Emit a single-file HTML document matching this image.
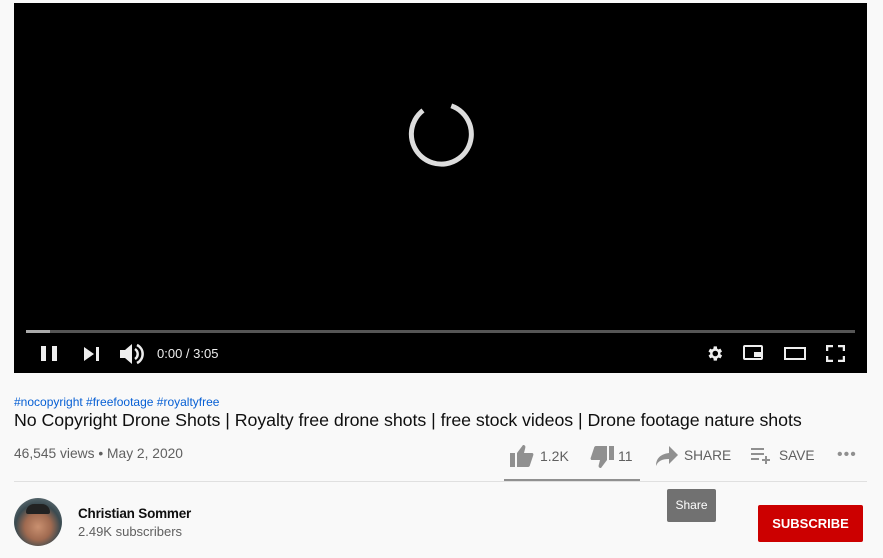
<!DOCTYPE html>
<html><head><style>
body{margin:0;width:883px;height:558px;background:#f9f9f9;font-family:"Liberation Sans",Arial,sans-serif;position:relative;overflow:hidden}
.a{position:absolute}
</style></head><body>
<div class="a" style="left:14px;top:3px;width:853px;height:370px;background:#000"></div>
<svg class="a" style="left:405px;top:98px" width="72" height="72" viewBox="0 0 72 72"><path d="M36 6 A30 30 0 1 1 11 20" fill="none" stroke="#ddd" stroke-width="5" transform="rotate(20 36 36)"/></svg>
<div class="a" style="left:26px;top:330px;width:829px;height:3px;background:#555"></div>
<div class="a" style="left:26px;top:330px;width:24px;height:3px;background:#aaa"></div>
<div class="a" style="left:41px;top:346px;width:5px;height:15px;background:#eee"></div>
<div class="a" style="left:52px;top:346px;width:5px;height:15px;background:#eee"></div>
<svg class="a" style="left:84px;top:347px" width="16" height="14"><path d="M0 0L10 7L0 14Z" fill="#eee"/><rect x="12" y="0" width="3" height="14" fill="#eee"/></svg>
<svg class="a" style="left:120px;top:343px" width="24" height="22" viewBox="0 0 24 22"><path d="M0 7h5l7-6v20l-7-6H0z" fill="#eee"/><path d="M15 6a6 6 0 0 1 0 10" stroke="#eee" stroke-width="2.5" fill="none"/><path d="M17 2a10 10 0 0 1 0 18" stroke="#eee" stroke-width="2.5" fill="none"/></svg>
<div class="a" style="left:157px;top:346px;color:#eee;font-size:13px">0:00 / 3:05</div>
<svg class="a" style="left:705px;top:344px" width="19" height="19" viewBox="0 0 24 24"><path fill="#eee" d="M19.4 13a7.5 7.5 0 0 0 0-2l2.1-1.6-2-3.5-2.5 1a7.7 7.7 0 0 0-1.7-1L15 3h-4l-.4 2.9a7.7 7.7 0 0 0-1.7 1l-2.5-1-2 3.5L6.6 11a7.5 7.5 0 0 0 0 2l-2.1 1.6 2 3.5 2.5-1a7.7 7.7 0 0 0 1.7 1L11 21h4l.4-2.9a7.7 7.7 0 0 0 1.7-1l2.5 1 2-3.5zM13 15.5a3.5 3.5 0 1 1 0-7 3.5 3.5 0 0 1 0 7z"/></svg>
<div class="a" style="left:743px;top:345px;width:20px;height:15px;border:2px solid #eee;border-radius:2px;box-sizing:border-box"></div>
<div class="a" style="left:754px;top:352px;width:7px;height:5px;background:#eee"></div>
<div class="a" style="left:784px;top:347px;width:22px;height:13px;border:2px solid #eee;box-sizing:border-box"></div>
<svg class="a" style="left:826px;top:345px" width="19" height="17"><path d="M1 6V1h6M12 1h6v5M18 11v5h-6M7 16H1v-5" stroke="#eee" stroke-width="2.5" fill="none"/></svg>
<div class="a" style="left:14px;top:395px;color:#065fd4;font-size:12px">#nocopyright #freefootage #royaltyfree</div>
<div class="a" style="left:14px;top:410px;color:#0f0f0f;font-size:17.8px;letter-spacing:-0.05px">No Copyright Drone Shots | Royalty free drone shots | free stock videos | Drone footage nature shots</div>
<div class="a" style="left:14px;top:446px;color:#606060;font-size:13.8px">46,545 views • May 2, 2020</div>
<svg class="a" style="left:510px;top:445px" width="24" height="22" viewBox="0 0 24 22"><rect x="0" y="8" width="5" height="14" fill="#909090"/><path d="M7 8l6-8c2 0 3 1 2 4l-1 4h8c1 0 2 1 1 3l-3 9c0 1-1 2-2 2H7z" fill="#909090"/></svg>
<div class="a" style="left:540px;top:448px;color:#606060;font-size:14px">1.2K</div>
<svg class="a" style="left:590px;top:446px" width="24" height="22" viewBox="0 0 24 22"><rect x="19" y="0" width="5" height="14" fill="#909090"/><path d="M17 14l-6 8c-2 0-3-1-2-4l1-4H2c-1 0-2-1-1-3l3-9c0-1 1-2 2-2h11z" fill="#909090"/></svg>
<div class="a" style="left:618px;top:448px;color:#606060;font-size:14px">11</div>
<svg class="a" style="left:656px;top:446px" width="22" height="20" viewBox="0 0 22 20"><path d="M13 0l9 9-9 9v-5C6 13 2 15 0 20c0-8 5-12 13-13z" fill="#909090"/></svg>
<div class="a" style="left:684px;top:448px;color:#606060;font-size:13.7px">SHARE</div>
<svg class="a" style="left:751px;top:447px" width="22" height="18"><path d="M0 2h13M0 7h13M0 12h8M15 9v8M11 13h8" stroke="#909090" stroke-width="2" fill="none"/></svg>
<div class="a" style="left:779px;top:448px;color:#606060;font-size:13.7px">SAVE</div>
<div class="a" style="left:837px;top:446px;color:#909090;font-size:16px;letter-spacing:1px">•••</div>
<div class="a" style="left:14px;top:481px;width:853px;height:1px;background:#e0e0e0"></div>
<div class="a" style="left:504px;top:479px;width:136px;height:2px;background:#909090"></div>
<div class="a" style="left:14px;top:498px;width:48px;height:48px;border-radius:50%;background:radial-gradient(circle at 50% 60%,#c99070 0,#a06a50 35%,#3a4a50 60%,#7a8a90 100%)"></div>
<div class="a" style="left:26px;top:504px;width:24px;height:10px;background:#222;border-radius:8px 8px 2px 2px"></div>
<div class="a" style="left:78px;top:506px;color:#0f0f0f;font-size:13.5px;font-weight:bold;letter-spacing:-0.2px">Christian Sommer</div>
<div class="a" style="left:78px;top:524px;color:#606060;font-size:13px">2.49K subscribers</div>
<div class="a" style="left:667px;top:489px;width:49px;height:33px;background:#717171;border-radius:2px;color:#fff;font-size:12px;line-height:33px;text-align:center">Share</div>
<div class="a" style="left:758px;top:505px;width:105px;height:37px;background:#cc0000;border-radius:2px;color:#fff;font-size:13px;font-weight:bold;line-height:37px;text-align:center">SUBSCRIBE</div>
</body></html>
